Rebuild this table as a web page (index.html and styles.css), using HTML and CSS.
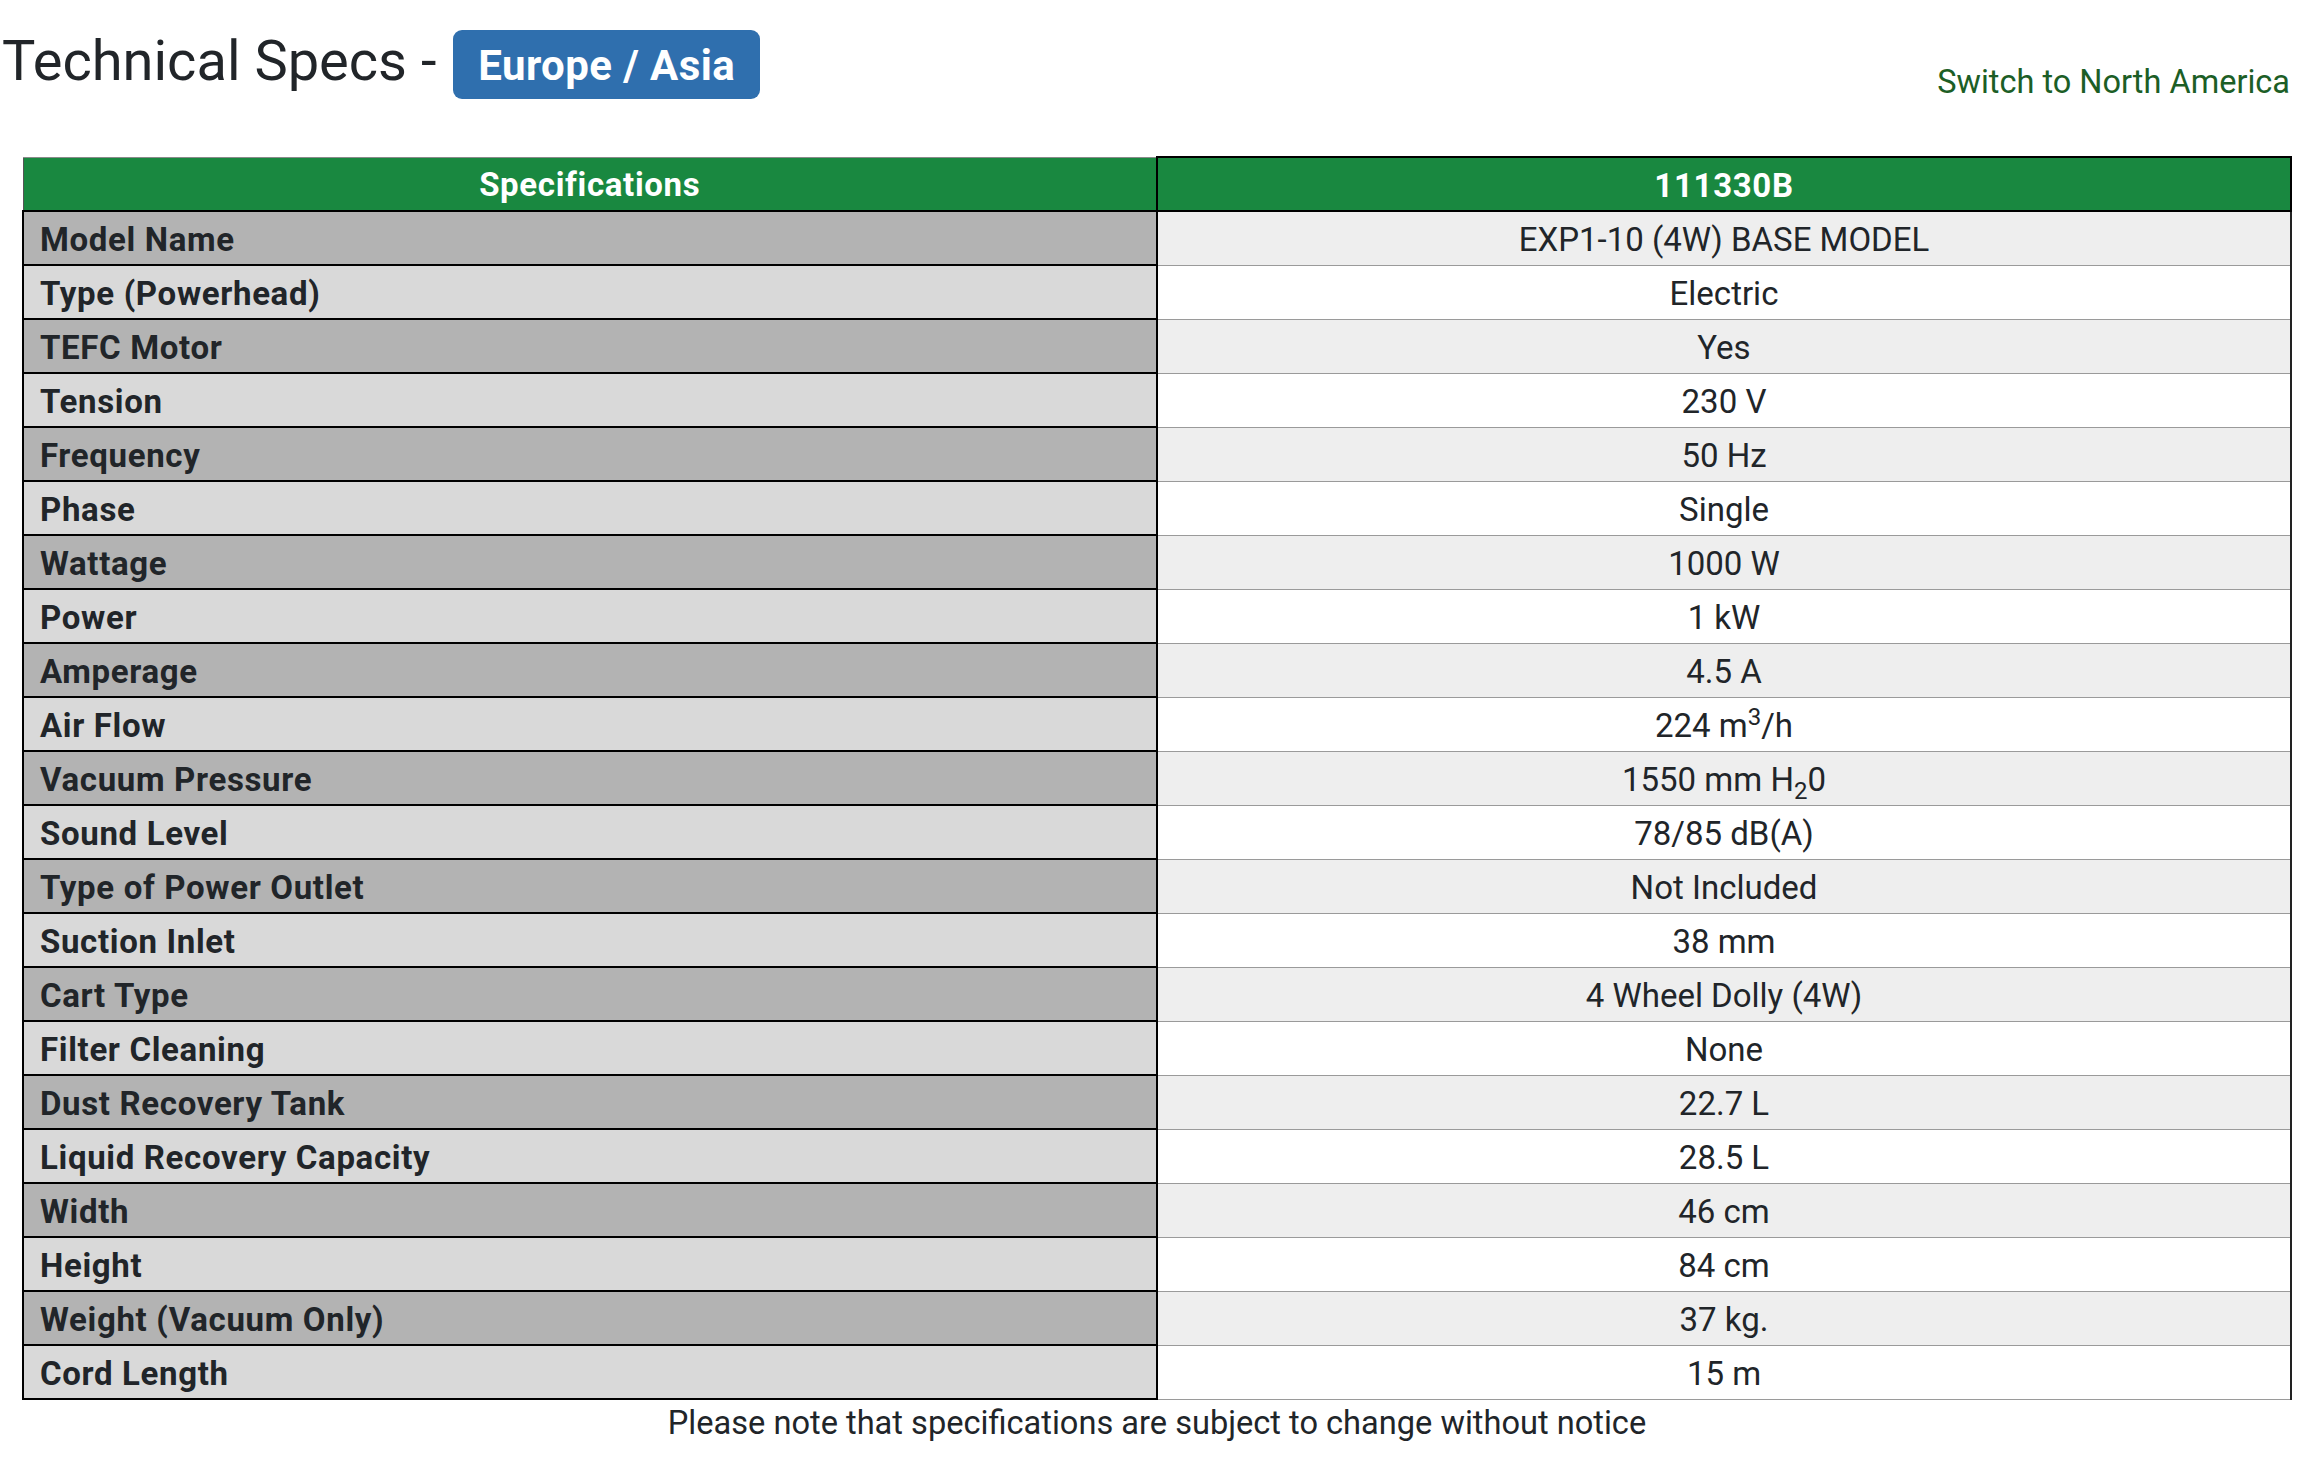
FILE: index.html
```html
<!DOCTYPE html>
<html lang="en">
<head>
<meta charset="utf-8">
<title>Technical Specs</title>
<link rel="stylesheet" href="styles.css">
</head>
<body>
<div class="page">
  <header class="top">
    <h2 class="title">Technical Specs - <span class="badge">Europe / Asia</span></h2>
    <a class="switch" href="#">Switch to North America</a>
  </header>
  <div class="specs">
    <table class="spec-table">
      <thead>
        <tr>
          <th class="h-spec">Specifications</th>
          <th class="h-model">111330B</th>
        </tr>
      </thead>
      <tbody>
        <tr><td class="label">Model Name</td><td class="value">EXP1-10 (4W) BASE MODEL</td></tr>
        <tr><td class="label">Type (Powerhead)</td><td class="value">Electric</td></tr>
        <tr><td class="label">TEFC Motor</td><td class="value">Yes</td></tr>
        <tr><td class="label">Tension</td><td class="value">230 V</td></tr>
        <tr><td class="label">Frequency</td><td class="value">50 Hz</td></tr>
        <tr><td class="label">Phase</td><td class="value">Single</td></tr>
        <tr><td class="label">Wattage</td><td class="value">1000 W</td></tr>
        <tr><td class="label">Power</td><td class="value">1 kW</td></tr>
        <tr><td class="label">Amperage</td><td class="value">4.5 A</td></tr>
        <tr><td class="label">Air Flow</td><td class="value">224 m<sup>3</sup>/h</td></tr>
        <tr><td class="label">Vacuum Pressure</td><td class="value">1550 mm H<sub>2</sub>0</td></tr>
        <tr><td class="label">Sound Level</td><td class="value">78/85 dB(A)</td></tr>
        <tr><td class="label">Type of Power Outlet</td><td class="value">Not Included</td></tr>
        <tr><td class="label">Suction Inlet</td><td class="value">38 mm</td></tr>
        <tr><td class="label">Cart Type</td><td class="value">4 Wheel Dolly (4W)</td></tr>
        <tr><td class="label">Filter Cleaning</td><td class="value">None</td></tr>
        <tr><td class="label">Dust Recovery Tank</td><td class="value">22.7 L</td></tr>
        <tr><td class="label">Liquid Recovery Capacity</td><td class="value">28.5 L</td></tr>
        <tr><td class="label">Width</td><td class="value">46 cm</td></tr>
        <tr><td class="label">Height</td><td class="value">84 cm</td></tr>
        <tr><td class="label">Weight (Vacuum Only)</td><td class="value">37 kg.</td></tr>
        <tr><td class="label">Cord Length</td><td class="value">15 m</td></tr>
      </tbody>
    </table>
    <p class="note">Please note that specifications are subject to change without notice</p>
  </div>
</div>
</body>
</html>
```

FILE: styles.css
```css
html, body {
  margin: 0;
  padding: 0;
  background: #ffffff;
}

body {
  font-family: Roboto, "Liberation Sans", Arial, sans-serif;
  color: #212529;
}

.top {
  display: flex;
  justify-content: space-between;
  align-items: flex-start;
  height: 156px;
  padding: 0 18px 0 2px;
  box-sizing: border-box;
}

.title {
  margin: 28px 0 0 0;
  font-size: 56px;
  line-height: 1.2;
  font-weight: 400;
  color: #212529;
}

.badge {
  display: inline-block;
  margin-left: 3px;
  background: #2f6fae;
  color: #ffffff;
  font-weight: 700;
  font-size: 42px;
  letter-spacing: 0.01em;
  line-height: 1;
  padding: 15px 25px 12px;
  border-radius: 9px;
}

.switch {
  margin-top: 63px;
  font-size: 32.5px;
  line-height: 1.2;
  color: #1c5e26;
  text-decoration: none;
}

.specs {
  margin: 0 16px 0 22px;
}

.spec-table {
  width: 100%;
  border-collapse: collapse;
  table-layout: fixed;
  font-size: 33px;
}

.spec-table tr {
  height: 54px;
}

.spec-table th,
.spec-table td {
  padding: 3px 16px 0;
  line-height: 1.2;
  vertical-align: middle;
}

.spec-table th {
  background: #198840;
  color: #ffffff;
  font-weight: 700;
  letter-spacing: 0.02em;
  text-align: center;
}

.h-spec {
  border-top: 1px solid #8a8a8a;
  border-left: 1px solid #555555;
  border-bottom: 2px solid #000000;
  border-right: 2px solid #000000;
}

.h-model {
  border: 2px solid #000000;
}

.label {
  font-weight: 700;
  letter-spacing: 0.02em;
  text-align: left;
  border: 2px solid #000000;
}

.value {
  text-align: center;
  border-top: 1px solid #9a9a9a;
  border-bottom: 1px solid #9a9a9a;
  border-right: 2px solid #222222;
}

tbody tr:nth-child(odd) .label {
  background: #b3b3b3;
}

tbody tr:nth-child(even) .label {
  background: #d9d9d9;
}

tbody tr:nth-child(odd) .value {
  background: #eeeeee;
}

tbody tr:nth-child(even) .value {
  background: #ffffff;
}

.value sup,
.value sub {
  font-size: 24px;
  line-height: 0;
}

.note {
  margin: 4px 0 0 0;
  text-align: center;
  font-size: 32.6px;
  line-height: 1.2;
}
```
